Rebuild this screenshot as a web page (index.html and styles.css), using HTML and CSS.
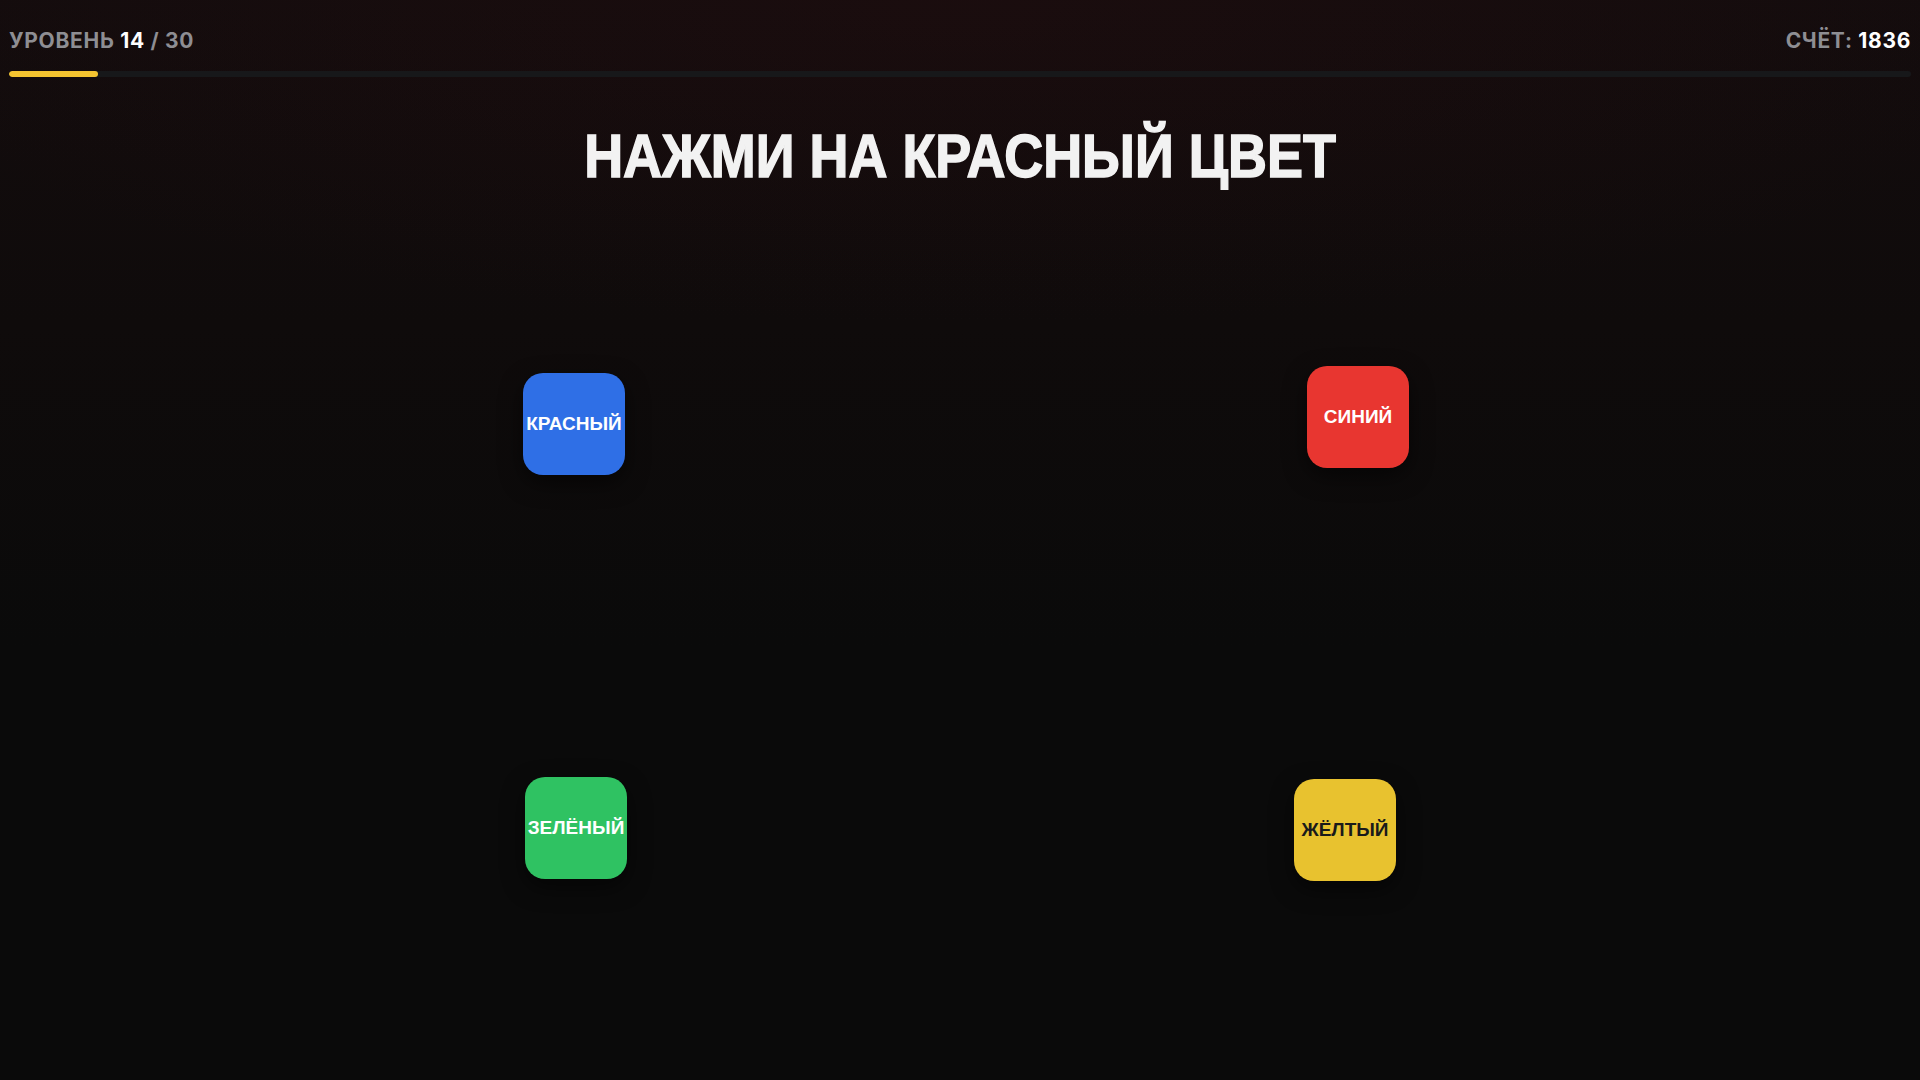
FILE: index.html
```html
<!DOCTYPE html>
<html lang="ru">
<head>
    <meta charset="UTF-8">
    <meta name="viewport" content="width=device-width, initial-scale=1.0">
    <title>Нажми на цвет</title>
    <link rel="stylesheet" href="styles.css">
</head>
<body>
    <div class="game">
        <!-- Level and score -->
        <header class="hud">
            <div class="hud-row">
                <div class="hud-stat">УРОВЕНЬ <span class="hud-value">14</span> / 30</div>
                <div class="hud-stat">СЧЁТ: <span class="hud-value">1836</span></div>
            </div>
            <div class="progress">
                <div class="progress-fill" style="width: 4.7%"></div>
            </div>
        </header>

        <!-- Task -->
        <h1 class="prompt"><span class="prompt-text">НАЖМИ НА КРАСНЫЙ ЦВЕТ</span></h1>

        <div class="board">
            <button class="tile tile-blue" style="left: 523px; top: 186px">КРАСНЫЙ</button>
            <button class="tile tile-red" style="left: 1307px; top: 179px">СИНИЙ</button>
            <button class="tile tile-green" style="left: 525px; top: 590px">ЗЕЛЁНЫЙ</button>
            <button class="tile tile-yellow" style="left: 1294px; top: 592px">ЖЁЛТЫЙ</button>
        </div>
    </div>
</body>
</html>
```

FILE: styles.css
```css
body {
    margin: 0;
    padding: 0;
    background-color: #0a0a0a;
    color: #f2f2f2;
    font-family: 'Inter', 'Liberation Sans', sans-serif;
}

.game {
    min-height: 100vh;
    display: flex;
    flex-direction: column;
    background:
        radial-gradient(ellipse 60% 30% at 50% 0%, rgba(40, 14, 16, 0.35), transparent),
        linear-gradient(180deg, #130c0d 0%, #0f0b0b 30%, #0a0a0a 60%, #0a0a0a 100%);
}

.hud {
    padding: 28px 9px 0;
}

.hud-row {
    display: flex;
    justify-content: space-between;
    align-items: center;
    line-height: 26px;
}

.hud-stat {
    font-size: 21px;
    font-weight: 700;
    letter-spacing: 0.7px;
    color: #8e8e93;
}

.hud-value {
    color: #ffffff;
}

.progress {
    margin-top: 17px;
    height: 6px;
    border-radius: 3px;
    background-color: #17181a;
    overflow: hidden;
}

.progress-fill {
    height: 100%;
    border-radius: 3px;
    background-color: #f4c430;
}

.prompt {
    margin: 48px 0 0;
    font-family: 'Liberation Sans', Arial, sans-serif;
    font-size: 62px;
    font-weight: 700;
    line-height: 62px;
    text-align: center;
    color: #f2f2f2;
}

/* condensed, extra heavy headline */
.prompt-text {
    display: inline-block;
    transform: scaleX(0.87);
    -webkit-text-stroke: 1.5px #f2f2f2;
}

.board {
    position: relative;
    flex: 1;
}

.tile {
    position: absolute;
    width: 102px;
    height: 102px;
    padding: 0;
    border: none;
    border-radius: 20px;
    display: flex;
    align-items: center;
    justify-content: center;
    font-family: 'Liberation Sans', Arial, sans-serif;
    font-size: 19px;
    font-weight: 700;
    color: #ffffff;
    box-shadow: 0 8px 22px rgba(0, 0, 0, 0.55);
    cursor: pointer;
}

.tile-blue {
    background-color: #2f6fe6;
}

.tile-red {
    background-color: #e83630;
}

.tile-green {
    background-color: #2fc262;
}

.tile-yellow {
    background-color: #e8c22f;
    color: #1a1a1a;
}
```
